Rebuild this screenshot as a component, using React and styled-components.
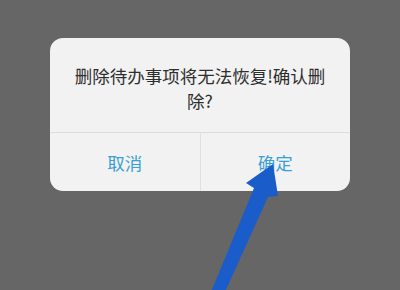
import styled, { createGlobalStyle } from "styled-components";

const GlobalStyle = createGlobalStyle`
  html, body {
    margin: 0;
    padding: 0;
    background: #666666;
  }
  body {
    font-family: "Noto Sans CJK SC", "Noto Sans", sans-serif;
  }
`;

const Screen = styled.div`
  position: relative;
  width: 400px;
  height: 290px;
  overflow: hidden;
  background: #666666;
  display: flex;
  justify-content: center;
  padding-top: 38px;
  box-sizing: border-box;
`;

const Dialog = styled.div`
  width: 300px;
  height: 153px;
  background: #f2f2f2;
  border-radius: 13px;
  display: flex;
  flex-direction: column;
  overflow: hidden;
`;

const Message = styled.p`
  margin: 0;
  padding: 25px 20px 19px;
  font-size: 17.5px;
  line-height: 25px;
  color: #2e2e2e;
  text-align: center;
  border-bottom: 1px solid #dcdcdc;
`;

const Actions = styled.div`
  flex: 1;
  display: flex;
`;

const Action = styled.button`
  flex: 1;
  border: none;
  background: transparent;
  font-family: inherit;
  font-size: 17.5px;
  color: #3a9fd4;
  padding: 0;
  cursor: pointer;

  & + & {
    border-left: 1px solid #e0e0e0;
  }
`;

const Arrow = styled.svg`
  position: absolute;
  left: 0;
  top: 0;
  pointer-events: none;
`;

const App = () => {
  return (
    <Screen>
      <GlobalStyle />
      <Dialog>
        <Message>删除待办事项将无法恢复!确认删除?</Message>
        <Actions>
          <Action>取消</Action>
          <Action>确定</Action>
        </Actions>
      </Dialog>
      <Arrow width="400" height="290" viewBox="0 0 400 290">
        <polygon
          points="211,292 225,292 268,197 278,196 273,164 246,183 254,188"
          fill="#1b5ccb"
        />
      </Arrow>
    </Screen>
  );
};

export default App;
